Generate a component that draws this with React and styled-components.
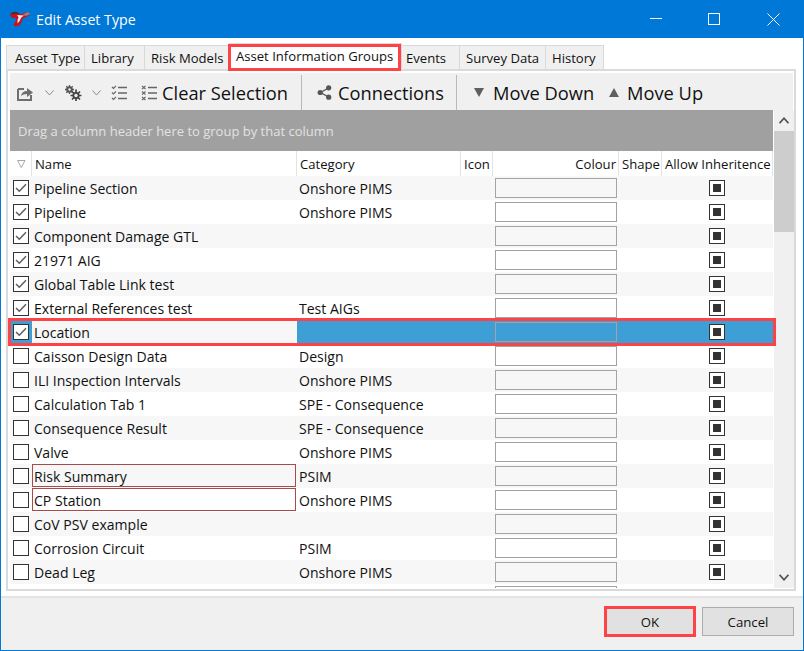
import React from "react";
import styled, { createGlobalStyle } from "styled-components";

const FONT = `"Open Sans", "Noto Sans", "Liberation Sans", sans-serif`;

const GlobalStyle = createGlobalStyle`
  html, body {
    margin: 0;
    padding: 0;
    overflow: hidden;
    background: #fff;
  }
  * {
    box-sizing: border-box;
  }
`;

const Window = styled.div`
  width: 804px;
  height: 651px;
  display: flex;
  flex-direction: column;
  border: 1px solid #0078d7;
  border-top: 0;
  font-family: ${FONT};
  color: #111;
  background: #fff;
  overflow: hidden;
`;

const TitleBar = styled.div`
  height: 38px;
  flex: none;
  margin: 0 -1px;
  display: flex;
  align-items: center;
  background: #0078d7;
  color: #fff;
  padding: 0 2px 0 10px;
`;

const Title = styled.div`
  font-size: 14.2px;
  margin-left: 6px;
  flex: 1;
`;

const WindowButton = styled.div`
  width: ${(p) => p.$w}px;
  height: 38px;
  display: flex;
  align-items: center;
  justify-content: center;
  flex: none;
`;

const Main = styled.div`
  flex: 1;
  min-height: 0;
  display: flex;
  flex-direction: column;
  padding: 7px 7px 0 5px;
`;

const TabStrip = styled.div`
  display: flex;
  height: 24px;
  flex: none;
  position: relative;
  z-index: 2;
`;

const Tab = styled.div`
  position: relative;
  width: ${(p) => p.$w}px;
  height: ${(p) => (p.$active ? "26px" : "24px")};
  margin-top: ${(p) => (p.$active ? "-2px" : "0")};
  padding-left: ${(p) => p.$pl}px;
  padding-bottom: ${(p) => (p.$active ? "2px" : "0")};
  display: flex;
  align-items: center;
  font-size: 13.1px;
  background: ${(p) => (p.$active ? "#fff" : "#f0f0f0")};
  border: 1px solid #d9d9d9;
  border-left-width: ${(p) => (p.$first ? "1px" : "0")};
  border-bottom: 0;
  white-space: nowrap;
`;

const RedBox = styled.div`
  position: absolute;
  inset: ${(p) => p.$inset || "0"};
  border: 3px solid #ff4245;
  pointer-events: none;
  z-index: 3;
`;

const TabPanel = styled.div`
  height: 522px;
  flex: none;
  border: 2px solid #dadada;
  padding: 2px;
  padding-right: 1px;
  display: flex;
  flex-direction: column;
`;

const Toolbar = styled.div`
  height: 37px;
  flex: none;
  display: flex;
  align-items: center;
  background: #f0f0f0;
  font-size: 18.3px;
  padding-left: 7px;
  padding-top: 2px;
`;

const ToolIcon = styled.div`
  display: flex;
  align-items: center;
  justify-content: center;
  flex: none;
  width: ${(p) => p.$w}px;
  margin-left: ${(p) => p.$ml || 0}px;
`;

const ToolLabel = styled.span`
  margin-left: ${(p) => p.$ml || 0}px;
  white-space: nowrap;
  flex: none;
  width: ${(p) => p.$w}px;
`;

const ToolSep = styled.div`
  width: 1px;
  height: 35px;
  background: #b9b9b9;
  flex: none;
`;

const GridArea = styled.div`
  flex: 1;
  min-height: 0;
  display: flex;
`;

const Grid = styled.div`
  width: 763px;
  flex: none;
  display: flex;
  flex-direction: column;
  height: 478px;
`;

const GroupBand = styled.div`
  height: 41px;
  flex: none;
  background: #a0a0a0;
  color: #e2e2e2;
  font-size: 13px;
  display: flex;
  align-items: center;
  padding-left: 8px;
`;

const columns = "22px 265px 164px 32px 126px 43px 111px";

const HeaderRow = styled.div`
  display: grid;
  grid-template-columns: ${columns};
  height: 25px;
  flex: none;
  font-size: 13.1px;
`;

const HeaderCell = styled.div`
  display: flex;
  align-items: center;
  justify-content: ${(p) => (p.$right ? "flex-end" : "flex-start")};
  padding: 1px 2px 0 ${(p) => p.$pl || 3}px;
  border-right: 1px solid #e3e3e3;
  white-space: nowrap;
`;

const Row = styled.div`
  position: relative;
  display: grid;
  grid-template-columns: ${columns};
  grid-template-rows: 24px;
  height: ${(p) => (p.$peek ? "4px" : "24px")};
  overflow: ${(p) => (p.$peek ? "hidden" : "visible")};
  flex: none;
  font-size: 14.05px;
  background: ${(p) => (p.$selected ? "#3d9fd6" : p.$odd ? "#f7f7f7" : "#fff")};
`;

const Cell = styled.div`
  display: flex;
  align-items: center;
  padding-left: 2px;
  white-space: nowrap;
  min-width: 0;
`;

const NameCell = styled(Cell)`
  background: ${(p) => (p.$selected ? "#f7f7f7" : "transparent")};
  border: ${(p) => (p.$error ? "1px solid #a84a4a" : "0")};
  padding-left: ${(p) => (p.$error ? "1px" : "2px")};
  padding-top: ${(p) => (p.$error ? "1px" : "0")};
  height: ${(p) => (p.$error ? "23px" : "24px")};
  margin-right: ${(p) => (p.$error ? "1px" : "0")};
`;

const CheckCell = styled(Cell)`
  padding-left: 3px;
`;

const CenterCell = styled(Cell)`
  justify-content: center;
  padding: 0 1px 0 0;
`;

const CheckBox = styled.div`
  width: 16px;
  height: 16px;
  border: 1px solid #333;
  background: #fff;
  display: flex;
  align-items: center;
  justify-content: center;
`;

const MixedBox = styled(CheckBox)`
  &::after {
    content: "";
    width: 8px;
    height: 8px;
    background: #333;
  }
`;

const ColourInput = styled.div`
  width: 122px;
  height: 20px;
  border: 1px solid #a3a3a3;
`;

const ScrollBar = styled.div`
  width: 20px;
  flex: none;
  margin-left: 1px;
  height: 478px;
  background: #f0f0f0;
  display: flex;
  flex-direction: column;
  align-items: center;
`;

const ScrollButton = styled.div`
  height: 21px;
  width: 100%;
  flex: none;
  display: flex;
  align-items: center;
  justify-content: center;
`;

const ScrollTrack = styled.div`
  flex: 1;
  width: 100%;
`;

const ScrollThumb = styled.div`
  height: 101px;
  width: 100%;
  background: #cdcdcd;
`;

const Footer = styled.div`
  flex: 1;
  margin: 5px -7px 0 -5px;
  background: #f0f0f0;
  border-top: 2px solid #e3e3e3;
  display: flex;
  align-items: flex-start;
  justify-content: flex-end;
  padding: 9px 9px 0 0;
  gap: 7px;
`;

const Button = styled.div`
  position: relative;
  width: ${(p) => p.$w}px;
  height: 29px;
  background: #e1e1e1;
  border: 1px solid #adadad;
  display: flex;
  align-items: center;
  justify-content: center;
  font-size: 13.2px;
`;

const Logo = () => (
  <svg width="20" height="16" viewBox="0 0 20 16">
    <path d="M0 4 Q1 1 5 1 Q8 1 10 3 Q14 3 17 1 Q20 1 20 3 Q18 6 13 7 Q12 11 10 14 Q7 16 4 15 Q3 14 5 11 Q7 8 6 7 Q2 8 0 4Z" fill="#c4141f" />
    <path d="M0.5 3.5 Q1.5 1 5 1 Q8 1 9.5 3 Q5 2.5 0.5 3.5Z" fill="#3c3034" />
    <path d="M13 3.2 Q15.5 2.6 17 1.2 Q20 1 20 3 Q18 4.6 15 5 Z" fill="#8f8689" />
    <path d="M7 4 Q10 4 14 4.5 Q12 5.8 11 7 Q10 10 7.5 12.5 Q7 9 8.5 6.5 Q8 5 7 4Z" fill="#f1eded" />
  </svg>
);

const ShareBoxIcon = () => (
  <svg width="17" height="16" viewBox="0 0 17 16">
    <path d="M1 4 H7 M1 4 V15 H14 V10" fill="none" stroke="#6e6e6e" strokeWidth="2" />
    <path d="M4 11 Q5 6 10 6 V3 L16 7.5 L10 12 V9 Q6 9 4 11Z" fill="#6e6e6e" />
  </svg>
);

const Chevron = ({ color = "#8a8a8a", up, size = 9, width = 1 }) => (
  <svg width={size} height={size - 3} viewBox="0 0 9 6">
    <path d={up ? "M0.5 5.5 L4.5 1 L8.5 5.5" : "M0.5 0.5 L4.5 5 L8.5 0.5"} fill="none" stroke={color} strokeWidth={width} />
  </svg>
);

const GearsIcon = () => (
  <svg width="17" height="16" viewBox="0 0 17 16" fill="none">
    <circle cx="4.5" cy="4.5" r="2.4" stroke="#555" strokeWidth="1.8" />
    <path d="M4.5 0 V9 M0 4.5 H9 M1.3 1.3 L7.7 7.7 M7.7 1.3 L1.3 7.7" stroke="#555" strokeWidth="1.3" />
    <circle cx="4.5" cy="4.5" r="1.2" fill="#f0f0f0" />
    <path d="M11 4.5 V16 M5.5 10.5 H16.5 M7 6.5 L15 14.5 M15 6.5 L7 14.5" stroke="#444" strokeWidth="1.7" />
    <circle cx="11" cy="10.5" r="3.6" fill="#444" />
    <circle cx="11" cy="10.5" r="1.7" fill="#f0f0f0" />
  </svg>
);

const CheckListIcon = () => (
  <svg width="16" height="16" viewBox="0 0 16 16" fill="none" stroke="#666">
    <path d="M7 2.5 H16 M7 8 H16 M7 13.5 H16" strokeWidth="1.3" />
    <path d="M1 2 L2.5 3.5 L5 0.8 M1 7.5 L2.5 9 L5 6.3 M1 13 L2.5 14.5 L5 11.8" strokeWidth="1.2" />
  </svg>
);

const CrossListIcon = () => (
  <svg width="16" height="16" viewBox="0 0 16 16" fill="none" stroke="#666">
    <path d="M7 2.5 H16 M7 8 H16 M7 13.5 H16" strokeWidth="1.3" />
    <path d="M1 1 L4.5 4 M4.5 1 L1 4 M1 6.5 L4.5 9.5 M4.5 6.5 L1 9.5 M1 12 L4.5 15 M4.5 12 L1 15" strokeWidth="1.1" />
  </svg>
);

const ShareNodesIcon = () => (
  <svg width="15" height="15" viewBox="0 0 15 15">
    <path d="M11.5 3 L3.5 7.5 L11.5 12" fill="none" stroke="#555" strokeWidth="1.4" />
    <circle cx="11.7" cy="2.8" r="2.6" fill="#555" />
    <circle cx="3.2" cy="7.5" r="2.6" fill="#555" />
    <circle cx="11.7" cy="12.2" r="2.6" fill="#555" />
  </svg>
);

const Triangle = ({ up }) => (
  <svg width="10" height="9" viewBox="0 0 10 9">
    <path d={up ? "M5 0 L10 9 H0Z" : "M0 0 H10 L5 9Z"} fill="#5f5f5f" />
  </svg>
);

const FilterIcon = () => (
  <svg width="9" height="8" viewBox="0 0 9 8">
    <path d="M0.5 0.5 H8 L4.3 7.5Z" fill="none" stroke="#a8a8a8" />
  </svg>
);

const Tick = () => (
  <svg width="12" height="10" viewBox="0 0 12 10">
    <path d="M1 5 L4.3 8.3 L11 1.3" fill="none" stroke="#5a5a5a" strokeWidth="1.4" />
  </svg>
);

const tabs = [
  { label: "Asset Type", w: 79, pl: 8, first: true },
  { label: "Library", w: 60, pl: 6 },
  { label: "Risk Models", w: 84, pl: 6 },
  { label: "Asset Information Groups", w: 173, pl: 7, active: true },
  { label: "Events", w: 58, pl: 4 },
  { label: "Survey Data", w: 86, pl: 6 },
  { label: "History", w: 58, pl: 6 },
];

const rows = [
  { name: "Pipeline Section", category: "Onshore PIMS", checked: true },
  { name: "Pipeline", category: "Onshore PIMS", checked: true },
  { name: "Component Damage GTL", category: "", checked: true },
  { name: "21971 AIG", category: "", checked: true },
  { name: "Global Table Link test", category: "", checked: true },
  { name: "External References test", category: "Test AIGs", checked: true },
  { name: "Location", category: "", checked: true, selected: true },
  { name: "Caisson Design Data", category: "Design" },
  { name: "ILI Inspection Intervals", category: "Onshore PIMS" },
  { name: "Calculation Tab 1", category: "SPE - Consequence" },
  { name: "Consequence Result", category: "SPE - Consequence" },
  { name: "Valve", category: "Onshore PIMS" },
  { name: "Risk Summary", category: "PSIM", error: true },
  { name: "CP Station", category: "Onshore PIMS", error: true },
  { name: "CoV PSV example", category: "" },
  { name: "Corrosion Circuit", category: "PSIM" },
  { name: "Dead Leg", category: "Onshore PIMS" },
  { name: "", category: "", peek: true },
];

const App = () => {
  return (
    <Window>
      <GlobalStyle />
      <TitleBar>
        <Logo />
        <Title>Edit Asset Type</Title>
        <WindowButton $w={56}>
          <svg width="12" height="12" viewBox="0 0 12 12">
            <path d="M0 5.5 H12" stroke="#fff" />
          </svg>
        </WindowButton>
        <WindowButton $w={60}>
          <svg width="12" height="12" viewBox="0 0 12 12">
            <rect x="0.5" y="0.5" width="11" height="11" fill="none" stroke="#fff" />
          </svg>
        </WindowButton>
        <WindowButton $w={58}>
          <svg width="13" height="13" viewBox="0 0 13 13">
            <path d="M0.5 0.5 L12.5 12.5 M12.5 0.5 L0.5 12.5" stroke="#fff" />
          </svg>
        </WindowButton>
      </TitleBar>
      <Main>
        <TabStrip>
          {tabs.map((t) => (
            <Tab key={t.label} $w={t.w} $pl={t.pl} $active={t.active} $first={t.first}>
              {t.label}
              {t.active && <RedBox $inset="0 0 -2px -1px" />}
            </Tab>
          ))}
        </TabStrip>
        <TabPanel>
          <Toolbar>
            <ToolIcon $w={17}><ShareBoxIcon /></ToolIcon>
            <ToolIcon $w={9} $ml={11}><Chevron /></ToolIcon>
            <ToolIcon $w={17} $ml={11}><GearsIcon /></ToolIcon>
            <ToolIcon $w={9} $ml={10}><Chevron /></ToolIcon>
            <ToolIcon $w={16} $ml={10}><CheckListIcon /></ToolIcon>
            <ToolIcon $w={16} $ml={14}><CrossListIcon /></ToolIcon>
            <ToolLabel $ml={5} $w={139}>Clear Selection</ToolLabel>
            <ToolSep />
            <ToolIcon $w={15} $ml={15}><ShareNodesIcon /></ToolIcon>
            <ToolLabel $ml={6} $w={118}>Connections</ToolLabel>
            <ToolSep />
            <ToolIcon $w={10} $ml={17}><Triangle /></ToolIcon>
            <ToolLabel $ml={9} $w={116}>Move Down</ToolLabel>
            <ToolIcon $w={10}><Triangle up /></ToolIcon>
            <ToolLabel $ml={8} $w={90}>Move Up</ToolLabel>
          </Toolbar>
          <GridArea>
            <Grid>
              <GroupBand>Drag a column header here to group by that column</GroupBand>
              <HeaderRow>
                <HeaderCell $pl={7}><FilterIcon /></HeaderCell>
                <HeaderCell>Name</HeaderCell>
                <HeaderCell>Category</HeaderCell>
                <HeaderCell>Icon</HeaderCell>
                <HeaderCell $right>Colour</HeaderCell>
                <HeaderCell>Shape</HeaderCell>
                <HeaderCell>Allow Inheritence</HeaderCell>
              </HeaderRow>
              {rows.map((r, i) => (
                <Row key={i} $odd={i % 2 === 0} $selected={r.selected} $peek={r.peek}>
                  <CheckCell>
                    <CheckBox>{r.checked && <Tick />}</CheckBox>
                  </CheckCell>
                  <NameCell $selected={r.selected} $error={r.error}>{r.name}</NameCell>
                  <Cell>{r.category}</Cell>
                  <Cell />
                  <Cell><ColourInput /></Cell>
                  <Cell />
                  <CenterCell><MixedBox /></CenterCell>
                  {r.selected && <RedBox $inset="-2px -3px -2px -2px" />}
                </Row>
              ))}
            </Grid>
            <ScrollBar>
              <ScrollButton><Chevron up color="#555" size={10} width={1.6} /></ScrollButton>
              <ScrollThumb />
              <ScrollTrack />
              <ScrollButton><Chevron color="#555" size={10} width={1.6} /></ScrollButton>
            </ScrollBar>
          </GridArea>
        </TabPanel>
        <Footer>
          <Button $w={90}>
            OK
            <RedBox $inset="-2px" />
          </Button>
          <Button $w={92}>Cancel</Button>
        </Footer>
      </Main>
    </Window>
  );
};

export default App;
